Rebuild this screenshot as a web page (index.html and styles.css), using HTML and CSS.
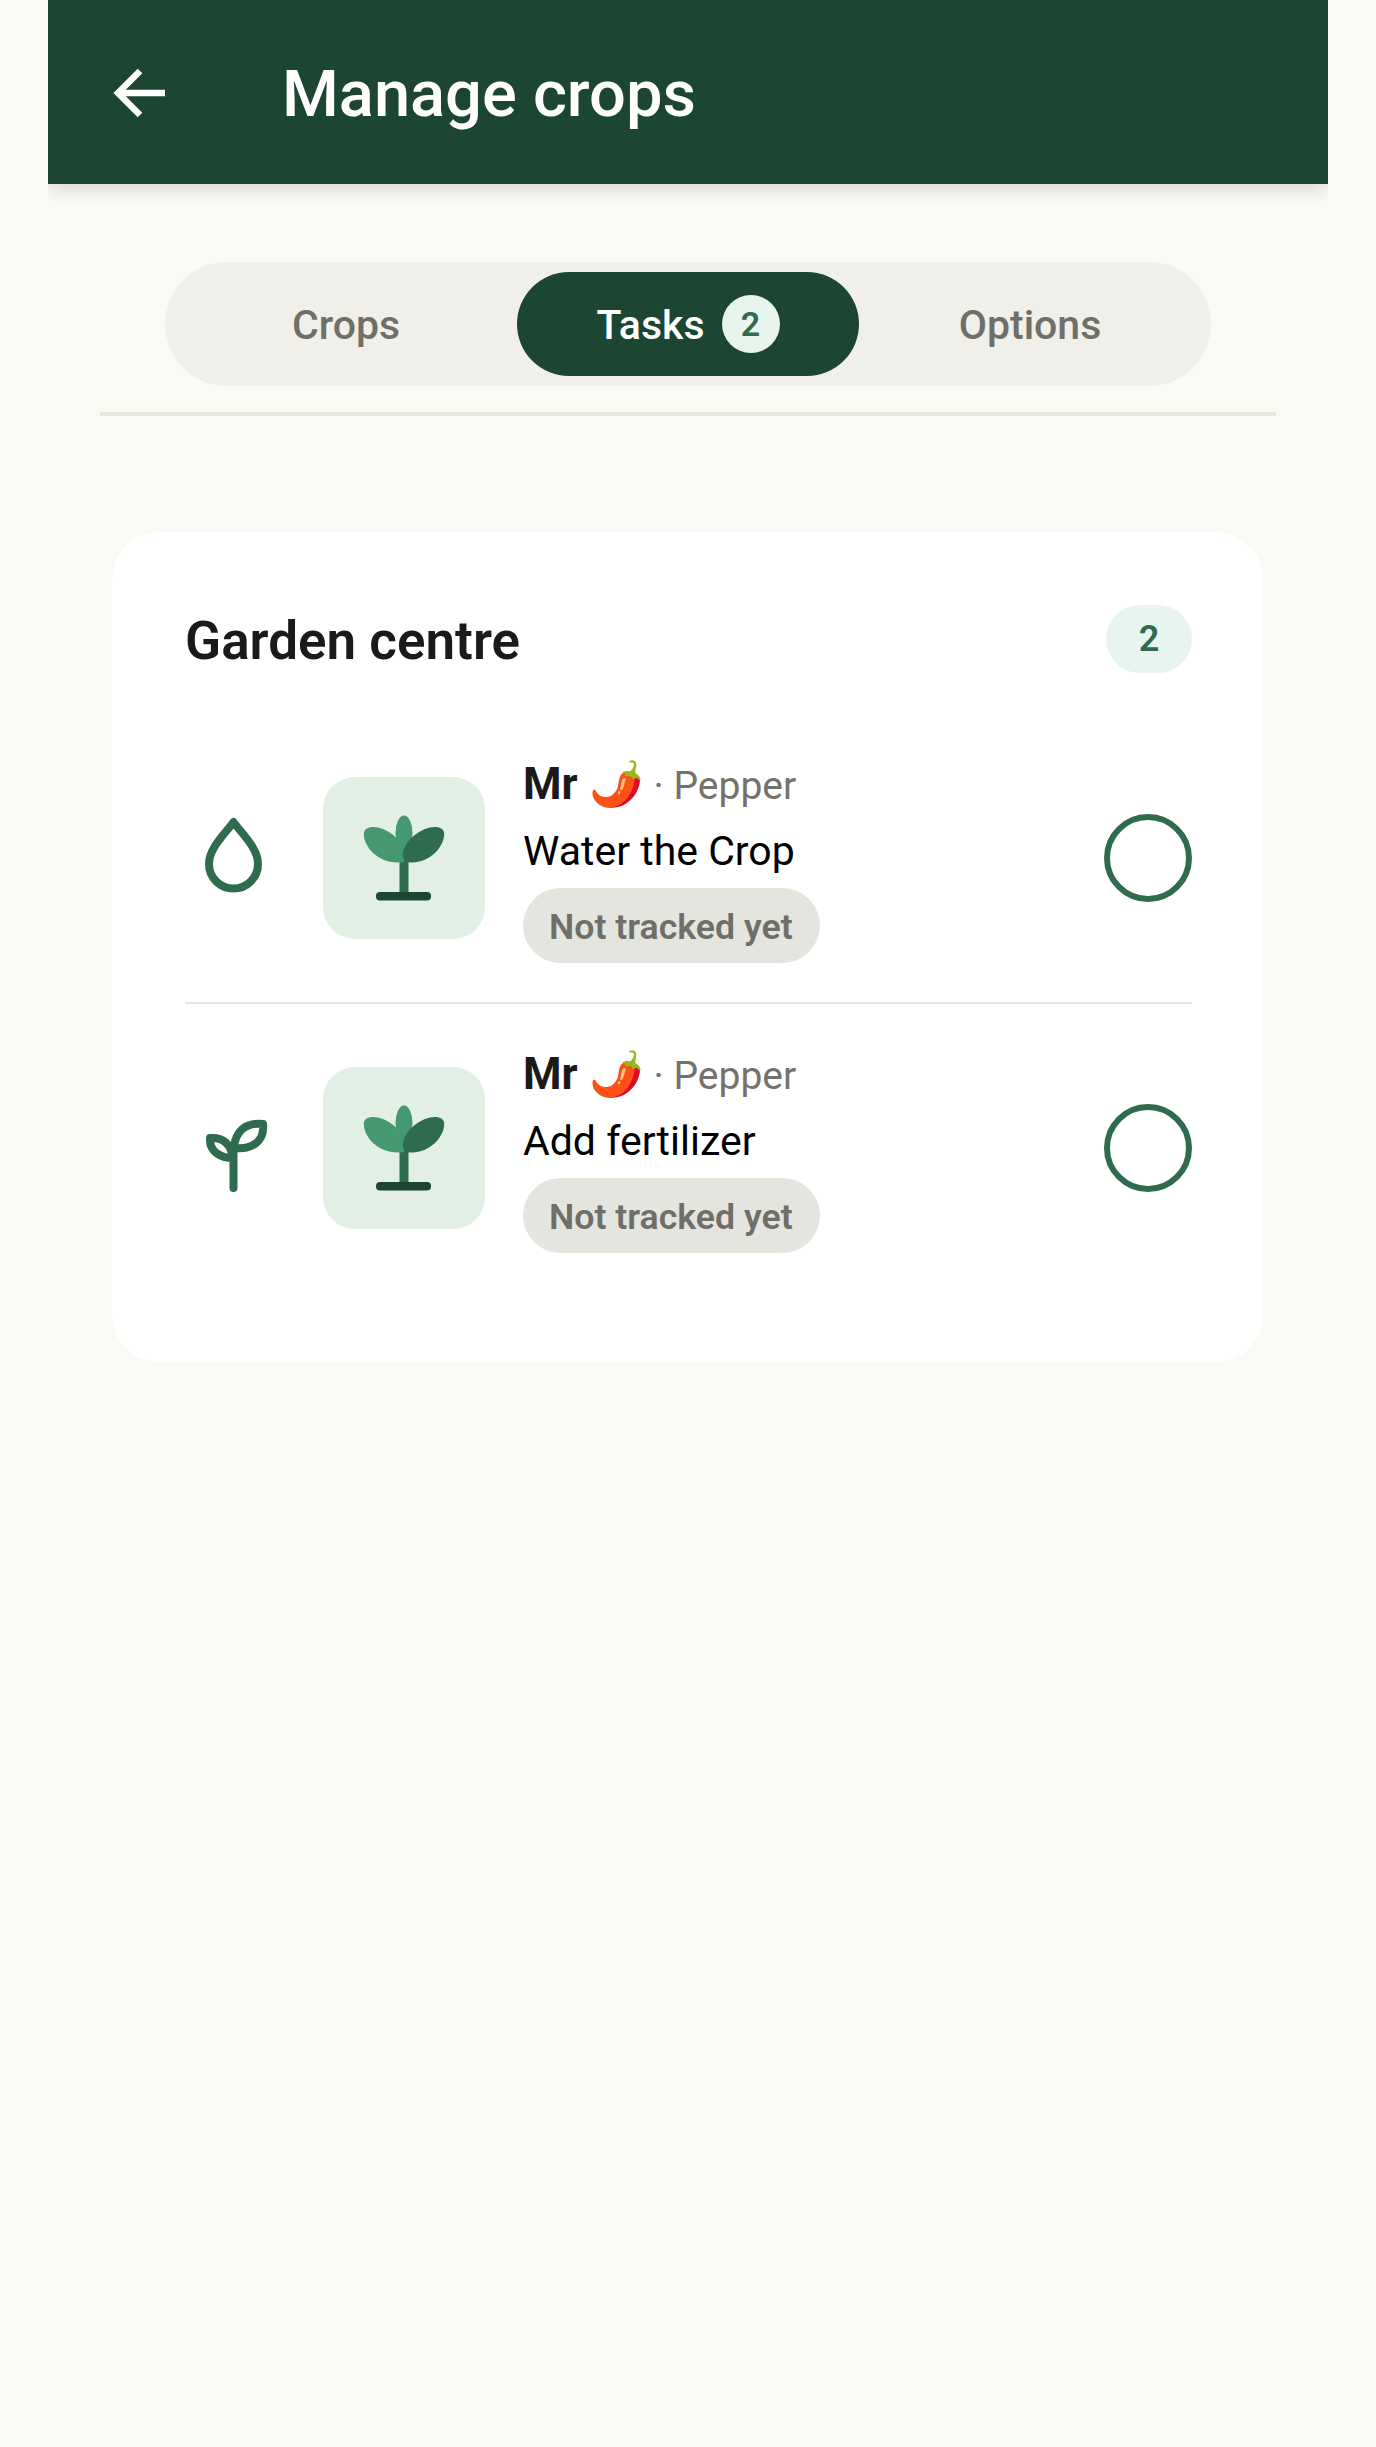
FILE: index.html
```html
<!DOCTYPE html>
<html lang="en">
<head>
<meta charset="utf-8">
<title>Manage crops</title>
<link rel="stylesheet" href="styles.css">
</head>
<body>
<div class="app">
  <header class="topbar">
    <svg class="back" viewBox="0 0 64 64" aria-label="Back"><path d="M33 10 11 32l22 22M11 32h47"/></svg>
    <h1 class="title">Manage crops</h1>
  </header>
  <nav class="tabs-wrap">
    <div class="tabs">
      <div class="tab">Crops</div>
      <div class="tab tab-active">Tasks <span class="tab-count">2</span></div>
      <div class="tab">Options</div>
    </div>
  </nav>
  <section class="card">
    <div class="card-head">
      <h2 class="card-title">Garden centre</h2>
      <span class="count">2</span>
    </div>
    <div class="task">
      <svg class="task-icon" viewBox="0 0 96 96"><path d="M48.5 12C40 24 24 38 24 54a24.5 24.5 0 0 0 49 0C73 38 57 24 48.5 12Z"/></svg>
      <div class="tile">
        <svg viewBox="0 0 162 162"><rect class="p-mid" x="76.500" y="80" width="9" height="38"/><rect class="p-dark" x="53" y="115" width="55" height="8.500" rx="4"/><ellipse class="p-light" cx="81" cy="56" rx="8.500" ry="17.500"/><path class="p-light" d="M41 55C43 49 52 49 60 52 70 56 78 64 81 74V85C68 87 58 83 50 76 44 70 40 62 41 55Z"/><path class="p-mid" d="M121 55C119 49 110 49 102 52 92 56 84 64 81 72 79 76 79 83 84 85 94 87 104 83 112 76 118 70 122 62 121 55Z"/></svg>
      </div>
      <div class="info">
        <div class="who"><b class="name">Mr 🌶️</b><span class="kind">· Pepper</span></div>
        <div class="job">Water the Crop</div>
        <span class="pill">Not tracked yet</span>
      </div>
      <span class="check"></span>
    </div>
    <div class="task">
      <svg class="task-icon" viewBox="0 0 96 96"><path d="M78 24C60 22 50 32 49 48 66 50 80 42 78 24ZM25 38C38 37 46 44 48 58 36 58 24 52 25 38ZM48.500 50V88"/></svg>
      <div class="tile">
        <svg viewBox="0 0 162 162"><rect class="p-mid" x="76.500" y="80" width="9" height="38"/><rect class="p-dark" x="53" y="115" width="55" height="8.500" rx="4"/><ellipse class="p-light" cx="81" cy="56" rx="8.500" ry="17.500"/><path class="p-light" d="M41 55C43 49 52 49 60 52 70 56 78 64 81 74V85C68 87 58 83 50 76 44 70 40 62 41 55Z"/><path class="p-mid" d="M121 55C119 49 110 49 102 52 92 56 84 64 81 72 79 76 79 83 84 85 94 87 104 83 112 76 118 70 122 62 121 55Z"/></svg>
      </div>
      <div class="info">
        <div class="who"><b class="name">Mr 🌶️</b><span class="kind">· Pepper</span></div>
        <div class="job">Add fertilizer</div>
        <span class="pill">Not tracked yet</span>
      </div>
      <span class="check"></span>
    </div>
  </section>
</div>
</body>
</html>
```
FILE: styles.css
```css
* { box-sizing: border-box; }
html, body { margin: 0; height: 100%; }
body {
  background: #fafaf5;
  font-family: Roboto, "Noto Sans", "Liberation Sans", sans-serif;
  color: #1a1a1a;
}
.app { margin: 0 48px; overflow-x: clip; overflow-y: visible; }
.topbar {
  height: 184px;
  background: #1c4532;
  display: flex;
  align-items: center;
  gap: 111px;
  padding-left: 59px;
  box-shadow: 0 5px 16px rgba(0, 0, 0, 0.14);
}
.back { width: 64px; height: 64px; flex: none; margin-top: 2px; }
.back path { fill: none; stroke: #fff; stroke-width: 6.5; }
.title { margin: 4px 0 0; font-size: 65px; font-weight: 500; color: #fff; }
.tabs-wrap {
  margin: 78px 52px 0;
  padding-bottom: 26px;
  border-bottom: 4px solid #e8e8e0;
  display: flex;
  justify-content: center;
}
.tabs {
  width: 1046px;
  padding: 10px;
  background: #f0efe9;
  border-radius: 62px;
  display: grid;
  grid-template-columns: repeat(3, 1fr);
}
.tab {
  height: 104px;
  display: flex;
  align-items: center;
  justify-content: center;
  gap: 17px;
  padding-top: 2px;
  font-size: 41px;
  font-weight: 500;
  color: #6f6f68;
  border-radius: 52px;
}
.tab-active { background: #1c4532; color: #fff; }
.tab-count {
  width: 58px;
  height: 58px;
  margin-top: -2px;
  border-radius: 50%;
  background: #e8f4ee;
  color: #2f6b4f;
  font-size: 34px;
  font-weight: 600;
  display: flex;
  align-items: center;
  justify-content: center;
}
.card {
  margin: 116px 65px 0 64px;
  padding: 73px 71px 70px 73px;
  background: #fff;
  border-radius: 48px;
}
.card-head {
  display: flex;
  align-items: center;
  justify-content: space-between;
  height: 68px;
  margin-bottom: 41px;
}
.card-title { margin: 4px 0 0; font-size: 53px; font-weight: 600; }
.count {
  width: 86px;
  height: 68px;
  border-radius: 34px;
  background: #e8f4ee;
  color: #2f6b4f;
  font-size: 36px;
  font-weight: 600;
  display: flex;
  align-items: center;
  justify-content: center;
}
.task {
  display: flex;
  align-items: center;
  height: 288px;
}
.task + .task {
  height: 290px;
  border-top: 2px solid #e5e5df;
}
.task-icon {
  width: 96px;
  height: 96px;
  flex: none;
  margin-right: 42px;
  fill: none;
  stroke: #2f6b4f;
  stroke-width: 8;
  stroke-linecap: round;
  stroke-linejoin: round;
}
.tile {
  width: 162px;
  height: 162px;
  flex: none;
  margin-right: 38px;
  background: #e2efe4;
  border-radius: 32px;
}
.tile svg { display: block; width: 162px; height: 162px; }
.p-light { fill: #459970; }
.p-mid { fill: #2f6b4f; }
.p-dark { fill: #1c4532; }
.info {
  flex: 1;
  min-width: 0;
  display: flex;
  flex-direction: column;
  align-items: flex-start;
}
.who { display: flex; align-items: baseline; gap: 10px; height: 63px; line-height: 62px; }
.name { font-size: 44px; font-weight: 700; }
.kind { font-size: 39px; color: #73736c; }
.job { font-size: 41px; line-height: 70px; color: #000; }
.pill {
  display: flex;
  align-items: center;
  height: 75px;
  margin-top: 2px;
  padding: 3px 27px 0 26px;
  border-radius: 38px;
  background: #e5e5df;
  color: #6f6f68;
  font-size: 35.7px;
  font-weight: 600;
}
.check {
  width: 88px;
  height: 88px;
  flex: none;
  border: 6px solid #2f6b4f;
  border-radius: 50%;
}
```
